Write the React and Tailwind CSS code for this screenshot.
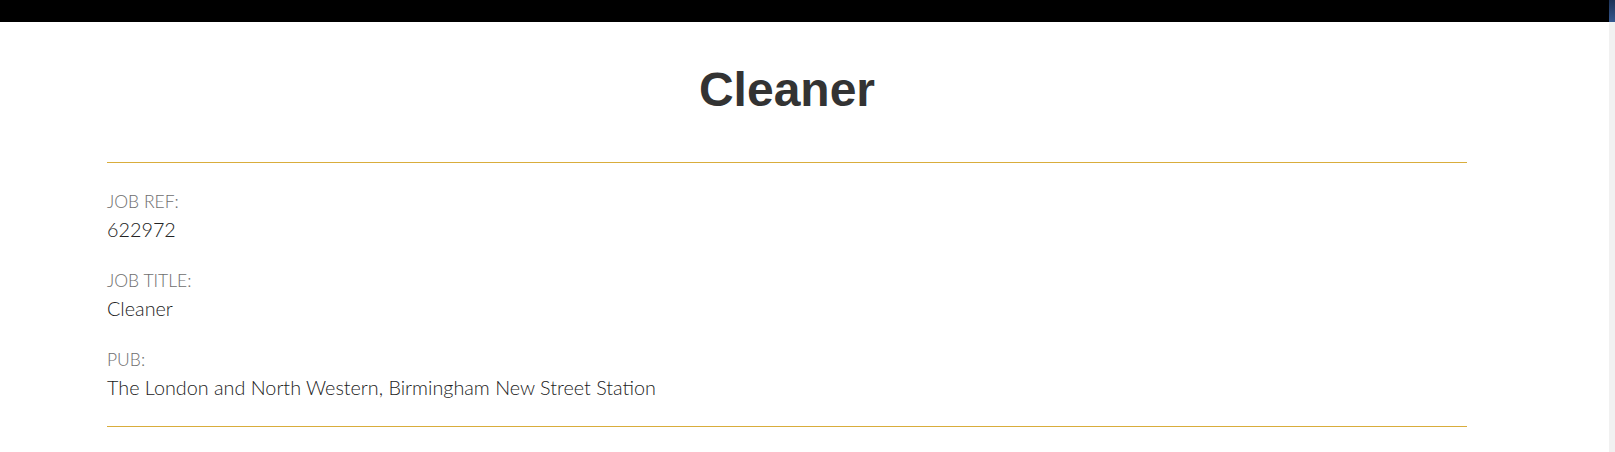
import React from 'react';

const fields = [
  { label: 'Job Ref:', value: '622972' },
  { label: 'Job Title:', value: 'Cleaner' },
  { label: 'Pub:', value: 'The London and North Western, Birmingham New Street Station' },
];

const App = () => {
  return (
    <div className="flex h-[452px] w-full overflow-hidden bg-white">
      <div className="flex-1">
        <div className="h-[22px] bg-black"></div>
        <div className="ml-[107px] w-[1360px]">
          <h1 className="mt-[38px] mb-[42px] text-center text-[48px] leading-[60px] font-bold text-[#333333] [font-family:'Liberation_Sans',Arial,sans-serif]">
            Cleaner
          </h1>
          <div className="border-y border-[#d9ad3c] pt-[25px] pb-[25px] [font-family:'Lato','Liberation_Sans',sans-serif]">
            {fields.map((f, i) => (
              <div key={f.label} className={i < fields.length - 1 ? 'mb-[24px]' : ''}>
                <div className="text-[17.5px] leading-[28px] uppercase text-[#6e6e6e] font-light">{f.label}</div>
                <div className="text-[19.8px] leading-[27px] text-[#222222] font-light">{f.value}</div>
              </div>
            ))}
          </div>
        </div>
      </div>
      <div className="flex w-[6px] flex-col bg-[#f1f1f1]">
        <div className="h-[22px] bg-gradient-to-b from-[#1d3357] to-[#36588f]"></div>
      </div>
    </div>
  );
};

export default App;
